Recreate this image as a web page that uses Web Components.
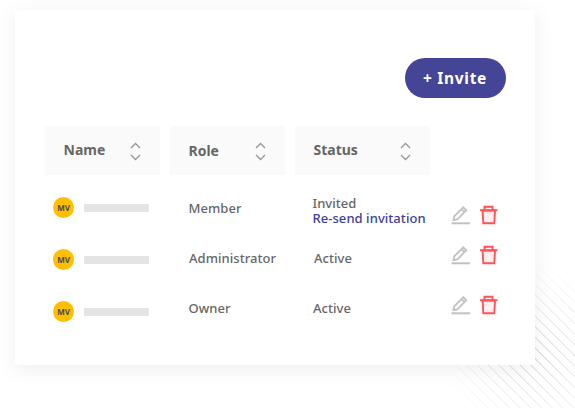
<!DOCTYPE html>
<html lang="en">
<head>
<meta charset="utf-8">
<title>Members</title>
<style>
body {
  margin: 0;
  width: 575px;
  height: 408px;
  overflow: hidden;
  background: #fff;
  font-family: "Noto Sans", "Open Sans", sans-serif;
  color: #666;
}
</style>
</head>
<body>
<members-panel>
  <invite-button slot="action">+ Invite</invite-button>

  <table-column style="--w: 115px; --gap: 10px">
    <sort-header slot="head">Name</sort-header>
    <user-chip style="--h: 64px">MV</user-chip>
    <user-chip style="--h: 40px">MV</user-chip>
    <user-chip style="--h: 64px">MV</user-chip>
  </table-column>

  <table-column style="--w: 115px; --gap: 10px">
    <sort-header slot="head" style="--drop: 1px">Role</sort-header>
    <text-cell style="--h: 66px">Member</text-cell>
    <text-cell style="--h: 34px; --in: 19px">Administrator</text-cell>
    <text-cell style="--h: 66px">Owner</text-cell>
  </table-column>

  <table-column style="--w: 135px; --gap: 20px">
    <sort-header slot="head">Status</sort-header>
    <text-cell style="--h: 71px; --in: 17.5px">Invited<span slot="link">Re-send invitation</span></text-cell>
    <text-cell style="--h: 24px; --in: 19px">Active</text-cell>
    <text-cell style="--h: 76px; --in: 18px">Active</text-cell>
  </table-column>

  <table-column style="--w: 50px; --gap: 0px; --top: 49px">
    <row-actions style="--h: 80px"></row-actions>
    <row-actions style="--h: 0px"></row-actions>
    <row-actions style="--h: 100px"></row-actions>
  </table-column>
</members-panel>

<script>
function define(name, html) {
  const template = document.createElement("template");
  template.innerHTML = html;
  customElements.define(name, class extends HTMLElement {
    constructor() {
      super();
      this.attachShadow({ mode: "open" });
      this.shadowRoot.appendChild(template.content.cloneNode(true));
    }
  });
}

// 45 degree stripes behind the card corner
let stripes = "";
for (let c = -60; c < 280; c += 10.67) {
  stripes += `<path d="M${c} 0l160 160"/>`;
}

define("members-panel", `
<style>
:host {
  display: block;
  position: relative;
  width: 575px;
  height: 408px;
}
.stripes {
  position: absolute;
  left: 435px;
  top: 260px;
}
.card {
  box-sizing: border-box;
  position: relative;
  width: 520px;
  height: 355px;
  padding: 48px 29.5px 0 30px;
  background: #fff;
  box-shadow: 0 4px 20px rgba(0, 0, 0, 0.07);
}
.wrap { padding: 10px 0 0 15px; }
.top {
  display: flex;
  justify-content: flex-end;
  margin-bottom: 28px;
}
.columns { display: flex; }
</style>
<svg class="stripes" width="140" height="148" viewBox="0 0 140 148">
  <defs>
    <radialGradient id="fade" gradientUnits="userSpaceOnUse" cx="101" cy="94" r="92">
      <stop offset="0" stop-color="#fff"/>
      <stop offset=".25" stop-color="#b4b4b4"/>
      <stop offset=".55" stop-color="#6c6c6c"/>
      <stop offset="1" stop-color="#000"/>
    </radialGradient>
    <mask id="m" maskUnits="userSpaceOnUse" x="0" y="0" width="140" height="148">
      <rect width="140" height="148" fill="url(#fade)"/>
    </mask>
  </defs>
  <g mask="url(#m)"><g transform="translate(-98.6 0)" stroke="#c8c8c8">${stripes}</g></g>
</svg>
<div class="wrap">
  <div class="card">
    <div class="top"><slot name="action"></slot></div>
    <div class="columns"><slot></slot></div>
  </div>
</div>
`);

define("invite-button", `
<style>
:host {
  display: flex;
  align-items: center;
  justify-content: center;
  width: 101px;
  height: 40px;
  border-radius: 20px;
  background: #444596;
  color: #fff;
  font-size: 15.5px;
  font-weight: 700;
  letter-spacing: 0.7px;
}
</style>
<slot></slot>
`);

define("table-column", `
<style>
:host {
  flex: none;
  display: flex;
  flex-direction: column;
  width: var(--w);
  margin-right: var(--gap);
  padding-top: var(--top, 0);
}
</style>
<slot name="head"></slot>
<slot></slot>
`);

define("sort-header", `
<style>
:host {
  box-sizing: border-box;
  display: flex;
  align-items: center;
  justify-content: space-between;
  height: 49px;
  padding: 0 19px 0 18.5px;
  background: #fafafa;
  font-size: 14px;
  font-weight: 700;
}
.label { padding-top: var(--drop, 0); margin-top: -2px; }
svg { margin-top: 1px; }
</style>
<span class="label"><slot></slot></span>
<svg width="11" height="19" viewBox="0 0 11 19" fill="none" stroke="#979797" stroke-width="1.300">
  <path d="M1 6L5.500 1.500L10 6M1 13L5.500 17.500L10 13"/>
</svg>
`);

define("user-chip", `
<style>
:host {
  display: flex;
  align-items: center;
  gap: 10px;
  height: var(--h);
  padding-left: 8px;
}
.avatar {
  display: flex;
  align-items: center;
  justify-content: center;
  width: 21px;
  height: 21px;
  border-radius: 50%;
  background: #ffbf00;
  color: #4b4658;
  font-size: 8px;
  font-weight: 700;
}
.bar {
  width: 65px;
  height: 8px;
  margin-top: 2px;
  background: #e4e4e4;
}
</style>
<span class="avatar"><slot></slot></span>
<span class="bar"></span>
`);

define("text-cell", `
<style>
:host {
  display: flex;
  flex-direction: column;
  justify-content: center;
  height: var(--h);
  padding-left: var(--in, 18.5px);
  font-size: 13px;
  font-weight: 500;
  line-height: 15px;
  letter-spacing: 0.05px;
  white-space: nowrap;
}
::slotted([slot="link"]) { color: #3e3f95; }
</style>
<div><slot></slot></div>
<slot name="link"></slot>
`);

define("row-actions", `
<style>
:host {
  display: flex;
  align-items: center;
  gap: 10px;
  height: var(--h);
}
svg {
  flex: none;
  overflow: visible;
  filter: blur(0.55px);
}
</style>
<svg width="20" height="20" viewBox="0 0 20 20" fill="none" stroke="#c2c2c2" stroke-width="1.800">
  <path d="M3.500 15L4.300 11.300L13.300 2.300L16.300 5.300L7.300 14.300ZM11.500 4.100L14.500 7.100"/>
  <path d="M1.500 18.300H20" stroke-width="2"/>
</svg>
<svg width="18" height="20" viewBox="0 0 18 20" fill="none" stroke="#ff5358" stroke-width="1.900">
  <path d="M2.600 5.500H15L14.300 18.200H3.300Z" fill="#fff0ef"/>
  <path d="M0 5.200H17.500M4.500 5V1.700H12.500V5"/>
</svg>
`);
</script>
</body>
</html>
